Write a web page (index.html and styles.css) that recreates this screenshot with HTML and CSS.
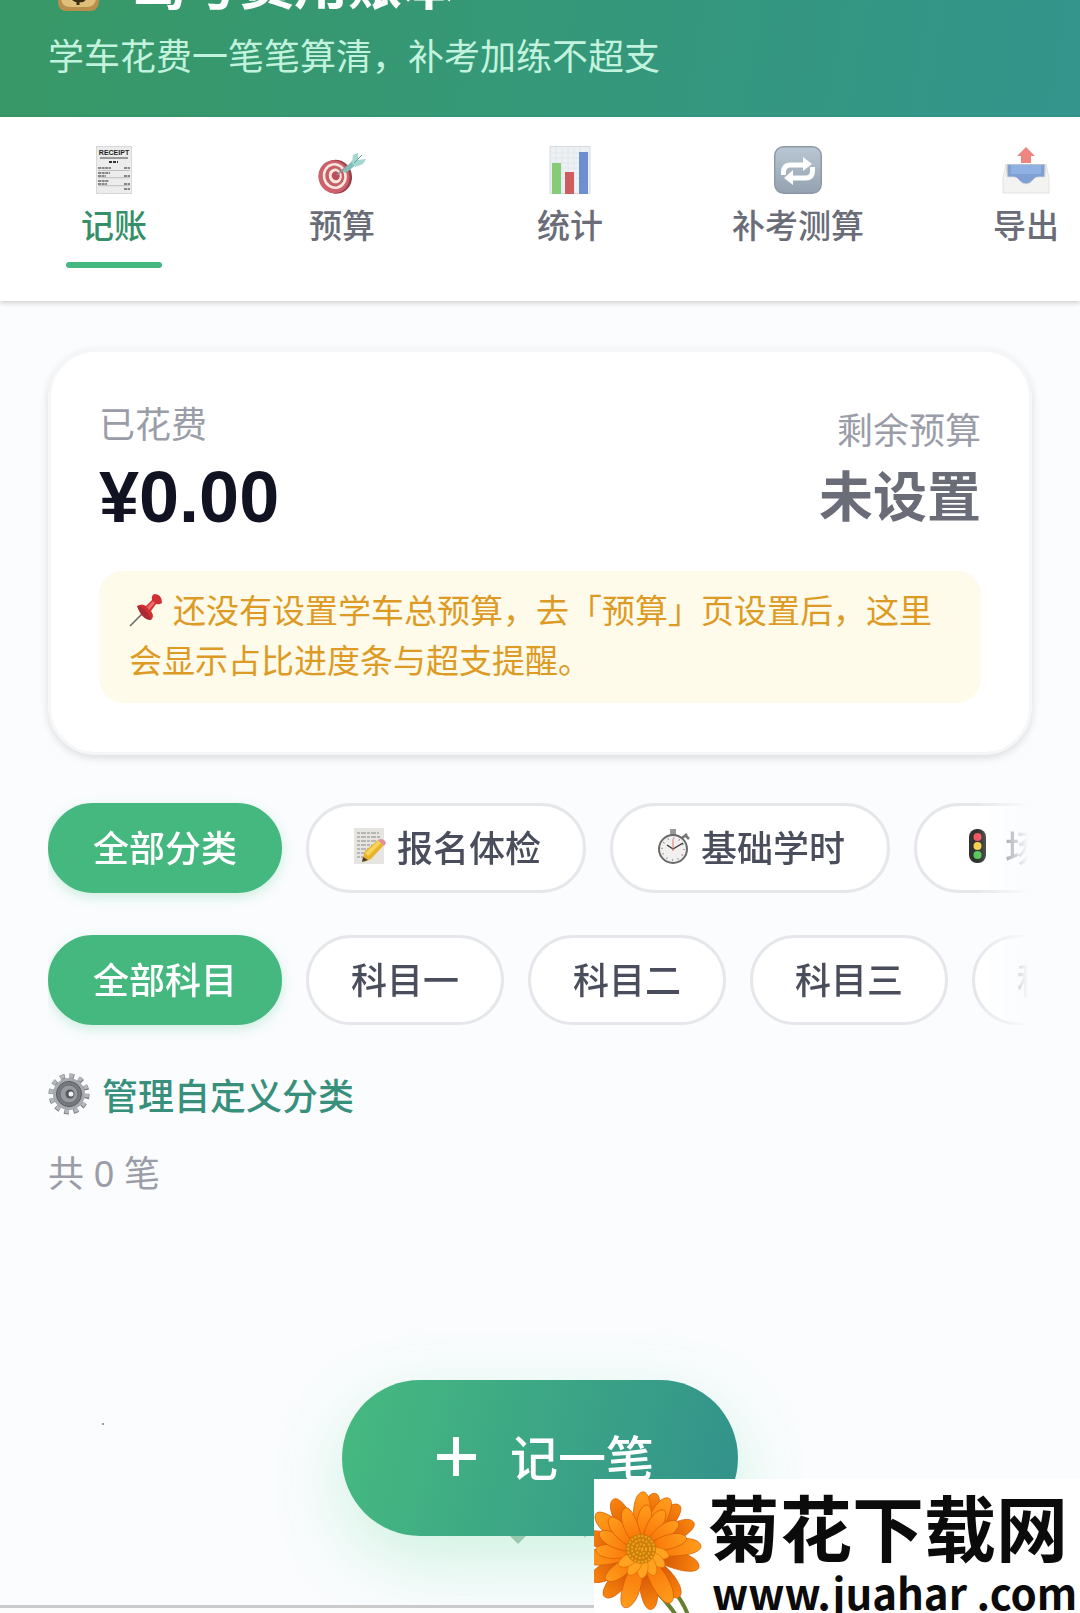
FILE: index.html
```html
<!DOCTYPE html>
<html lang="zh-CN">
<head>
<meta charset="utf-8">
<meta name="viewport" content="width=device-width, initial-scale=1">
<title>驾考费用账本</title>
<link rel="stylesheet" href="styles.css">
</head>
<body>
<header class="header">
  <h1 class="header-title">
    <svg class="icon-title" viewBox="0 0 54 54" aria-hidden="true">
      <path d="M20 6h17l-4 9q20 14 18 30-1 9-9 9H19q-9 0-9-9 0-16 14-30z" fill="#b98f4b"/>
      <path d="M24 18Q13 28 13 40q0 10 9 10h17q9 0 9-10 0-12-12-22z" fill="#e0c078"/>
      <circle cx="30" cy="34" r="12" fill="#edd48f"/>
      <path d="M37 29q-3-4-8-3-5 1-4 5 1 3 6 4 6 1 6 5 0 4-6 4-5 0-8-4M30 22v26" fill="none" stroke="#3a2c14" stroke-width="3"/>
    </svg>
    <span>驾考费用账本</span>
  </h1>
  <p class="header-sub">学车花费一笔笔算清，补考加练不超支</p>
</header>

<nav class="tabs">
  <button class="tab tab-active" type="button">
    <svg class="icon-tab" viewBox="0 0 48 48" aria-hidden="true">
      <path d="M6 0h36v48H6z" fill="#d8d8d8"/><path d="M7 1h34v46H7z" fill="#ececec"/>
      <text x="24" y="9" text-anchor="middle" class="receipt-head">RECEIPT</text>
      <path d="M10 12h28" stroke="#999" stroke-width="2"/>
      <path d="M19 16h9" stroke="#333" stroke-width="2" stroke-dasharray="3 1"/>
      <path d="M8 22h13M8 27h12M8 30h8M8 35h11M8 38h9M34 22h6M34 30h6M34 38h6M34 43h6" stroke="#666" stroke-width="1.500" stroke-dasharray="3 .6"/>
      <path d="M8 24.500h32M8 31.700h32M8 39.700h32" stroke="#aaa" stroke-width=".7"/>
    </svg>
    <span class="tab-label">记账</span>
  </button>
  <button class="tab" type="button">
    <svg class="icon-tab" viewBox="0 0 48 48" aria-hidden="true">
      <g transform="rotate(-14 17 31)">
        <ellipse cx="18" cy="31" rx="16" ry="17" fill="#9c3e47"/>
        <ellipse cx="16" cy="30.500" rx="15.500" ry="16.500" fill="#cc626b"/>
        <ellipse cx="17" cy="30" rx="12" ry="13" fill="#fae9e2"/>
        <ellipse cx="17" cy="30" rx="9.500" ry="10.500" fill="#c75f67"/>
        <ellipse cx="17.500" cy="30" rx="6.500" ry="7.500" fill="#fae9e2"/>
        <ellipse cx="18" cy="30" rx="4" ry="4.500" fill="#bd4f59"/>
      </g>
      <path d="M19 29 29 20" stroke="#8b8f91" stroke-width="1.600"/>
      <path d="M24 25 36 13l4 4-12 10z" fill="#82bdb9"/>
      <path d="m34 17 1-8 5-2v7l8-1-3 5-8 3z" fill="#a2d7d2"/><path d="m36 17 8-8" stroke="#5e9b98"/>
    </svg>
    <span class="tab-label">预算</span>
  </button>
  <button class="tab" type="button">
    <svg class="icon-tab" viewBox="0 0 48 48" aria-hidden="true">
      <path d="M4 .5h40v47H4z" fill="#eef1f4" stroke="#d5dade"/>
      <path d="M10 1v46M16 1v46M22 1v46M28 1v46M34 1v46M40 1v46M5 7h38M5 12h38M5 17h38M5 22h38M5 27h38M5 32h38" stroke="#e0e6ea"/>
      <path d="M6 17h9v31H6z" fill="#86cb78"/><path d="M19 26h9v22h-9z" fill="#cf5d5f"/><path d="M33 6h9v42h-9z" fill="#6e8fcd"/>
    </svg>
    <span class="tab-label">统计</span>
  </button>
  <button class="tab" type="button">
    <svg class="icon-tab" viewBox="0 0 48 48" aria-hidden="true">
      <defs><linearGradient id="tile" x2="0" y2="1"><stop stop-color="#bac7d3"/><stop offset="1" stop-color="#93a1b0"/></linearGradient></defs>
      <rect x=".7" y=".7" width="46.600" height="46.600" rx="9" fill="url(#tile)" stroke="#8c9aa7" stroke-width="1.400"/>
      <path d="M9.500 29v-3q0-7 7-7H30M38.500 21v4q0 7-7 7H18" fill="none" stroke="#fff" stroke-width="5"/>
      <path d="m29 11 9 7-9 7zM19 24l-9 8 9 7z" fill="#fff"/>
    </svg>
    <span class="tab-label">补考测算</span>
  </button>
  <button class="tab" type="button">
    <svg class="icon-tab" viewBox="0 0 48 48" aria-hidden="true">
      <path d="m24 1 9 9h-4v7H19v-7h-4z" fill="#ee8581"/>
      <path d="M5 18h38l3 15H2z" fill="#b9c2cc"/><path d="M6 19h36v20H6z" fill="#7f9fd5"/><path d="M9 19h30v9H9z" fill="#8fb0e2"/>
      <path d="m4 18-3 14v15h46V32l-3-14-1 13h-7q-3 0-5 3-7 8-14 0-2-3-5-3H5z" fill="#f3f3f2" stroke="#dcdcda" stroke-width=".8"/>
    </svg>
    <span class="tab-label">导出</span>
  </button>
</nav>

<main class="main">
  <section class="card">
    <div class="summary">
      <div>
        <p class="caption">已花费</p>
        <p class="amount">¥0.00</p>
      </div>
      <div class="summary-right">
        <p class="caption">剩余预算</p>
        <p class="remaining">未设置</p>
      </div>
    </div>
    <p class="note"><svg class="icon-pin" viewBox="0 0 34 34" aria-hidden="true">
      <path d="M1 33 14 20" stroke="#686868" stroke-width="1.600"/>
      <path d="M8 13q5-3 9 0l6-6q-1-4 2-6 8 0 8 9-3 2-6 1l-5 7q4 6 0 9-8 0-14-14z" fill="#cf2f35"/>
      <path d="M8 13q9 1 14 14-9 0-14-14z" fill="#a82a32"/><path d="m18 14 6-6 2 2-6 7z" fill="#ef6b6b"/>
    </svg>还没有设置学车总预算，去「预算」页设置后，这里会显示占比进度条与超支提醒。</p>
  </section>

  <div class="chips">
    <button class="chip chip-active" type="button">全部分类</button>
    <button class="chip" type="button">
      <svg class="icon-chip" viewBox="0 0 36 36" aria-hidden="true">
        <path d="M3 0h30v36H3z" fill="#e6e5e2"/>
        <path d="M6 5h22M6 9h24M6 13h20M6 17h15M6 21h12M6 25h8M6 29h6" stroke="#888" stroke-width="1" stroke-dasharray="3 1 5 1"/>
        <path d="m12 29 2-6 13-11 6 5-13 14-7 3z" fill="#e9b32c"/><path d="m14 25 13-12 3 2-13 13z" fill="#f7d55a"/>
        <path d="m27 12 2-1q5 0 6 4l-2 3z" fill="#e58d9c"/><path d="m12 29-1 5 6-2z" fill="#4a3a2d"/>
      </svg>
      <span>报名体检</span>
    </button>
    <button class="chip" type="button">
      <svg class="icon-chip" viewBox="0 0 36 36" aria-hidden="true">
        <path d="M15 1h6v6h-6z" fill="#999"/><path d="m27 10 5-4M31 8l3 3" stroke="#777" stroke-width="2.500"/>
        <circle cx="18" cy="21" r="14" fill="#f1f0ee" stroke="#6a6a6a" stroke-width="2"/>
        <circle cx="18" cy="21" r="11" fill="none" stroke="#999" stroke-width="2" stroke-dasharray="1 4.760"/>
        <path d="m12 17 6 4 10-6" fill="none" stroke="#333" stroke-width="1.300"/><path d="M18 23V11" stroke="#db7770"/>
      </svg>
      <span>基础学时</span>
    </button>
    <button class="chip" type="button">
      <svg class="icon-chip" viewBox="0 0 36 36" aria-hidden="true">
        <rect x="10" y="1" width="17" height="34" rx="8" fill="#30332f"/>
        <circle cx="18.500" cy="9" r="4" fill="#ef5863"/><circle cx="18.500" cy="18" r="4" fill="#f5d14d"/><circle cx="18.500" cy="27" r="4" fill="#57c85b"/>
      </svg>
      <span>场地训练</span>
    </button>
  </div>

  <div class="chips">
    <button class="chip chip-active" type="button">全部科目</button>
    <button class="chip" type="button">科目一</button>
    <button class="chip" type="button">科目二</button>
    <button class="chip" type="button">科目三</button>
    <button class="chip" type="button">科目四</button>
  </div>

  <a class="manage" href="#categories">
    <svg class="icon-gear" viewBox="0 0 42 42" aria-hidden="true">
      <circle cx="21" cy="21" r="18" fill="none" stroke="#74777c" stroke-width="5" stroke-dasharray="4.700 4.720"/>
      <circle cx="21" cy="20.500" r="18" fill="none" stroke="#b4b7bb" stroke-width="4" stroke-dasharray="4 5.420"/>
      <circle cx="21" cy="21" r="16" fill="#a7aaae"/><circle cx="21" cy="21" r="12.500" fill="#777b81" stroke="#575b60"/>
      <circle cx="21" cy="21" r="9" fill="#989ca1" stroke="#686c71"/><circle cx="22" cy="21" r="4.500" fill="#55585d"/><circle cx="23" cy="21" r="2.500" fill="#f4f4f4"/>
    </svg>
    <span>管理自定义分类</span>
  </a>
  <p class="count">共 0 笔</p>
  <svg class="empty" viewBox="0 0 984 124" aria-hidden="true">
    <circle cx="55" cy="4" r="1" fill="#777"/>
    <path d="M458 112h24l-12 12z" fill="#a9c7b8"/><path d="M532 112h10l-5 6z" fill="#c4dccf"/>
  </svg>
</main>
<footer class="footer"></footer>

<button class="fab" type="button">
  <svg class="icon-plus" viewBox="0 0 60 60" aria-hidden="true"><path d="M30 12v39M11 32h39" stroke="#fff" stroke-width="6"/></svg>
  <span>记一笔</span>
</button>

<aside class="watermark">
  <svg class="flower" viewBox="0 0 110 134" aria-hidden="true">
    <defs>
      <linearGradient id="petal" x2="0" y2="1"><stop stop-color="#ff9d1c"/><stop offset=".6" stop-color="#fa7d0c"/><stop offset="1" stop-color="#d14802"/></linearGradient>
      <linearGradient id="petal-dark" x2="0" y2="1"><stop stop-color="#fa860e"/><stop offset="1" stop-color="#c03c00"/></linearGradient>
      <path id="p1" d="M48 72C36 50 37 16 48 13S60 50 48 72z" stroke="#d65a05" stroke-width=".7"/>
      <path id="p2" d="M48 72C37 54 39 29 48 26S57 54 48 72z" stroke="#d65a05" stroke-width=".7"/>
      <path id="p3" d="M48 72C40 65 41 48 48 45S56 65 48 72z" stroke="#e06a08" stroke-width=".6"/>
    </defs>
    <path d="M62 112q10 10 20 24M80 112q9 11 14 24" fill="none" stroke="#67802f" stroke-width="4"/>
    <g fill="url(#petal-dark)">
      <use href="#p1" transform="rotate(12 48 72)"/><use href="#p1" transform="rotate(38 48 72)"/><use href="#p1" transform="rotate(60 48 72)"/><use href="#p1" transform="rotate(105 48 72)"/><use href="#p1" transform="rotate(140 48 72)"/><use href="#p1" transform="rotate(170 48 72)"/><use href="#p1" transform="rotate(218 48 72)"/><use href="#p1" transform="rotate(240 48 72)"/><use href="#p1" transform="rotate(285 48 72)"/><use href="#p1" transform="rotate(330 48 72)"/>
    </g>
    <g fill="url(#petal)">
      <use href="#p1" transform="rotate(0 48 72)"/><use href="#p1" transform="rotate(26 48 72)"/><use href="#p1" transform="rotate(84 48 72)"/><use href="#p1" transform="rotate(150 48 72)"/><use href="#p1" transform="rotate(196 48 72)"/><use href="#p1" transform="rotate(262 48 72)"/><use href="#p1" transform="rotate(308 48 72)"/>
      <use href="#p2" transform="rotate(5 48 72)"/><use href="#p2" transform="rotate(27 48 72)"/><use href="#p2" transform="rotate(50 48 72)"/><use href="#p2" transform="rotate(72 48 72)"/><use href="#p2" transform="rotate(270 48 72)"/><use href="#p2" transform="rotate(292 48 72)"/><use href="#p2" transform="rotate(314 48 72)"/><use href="#p2" transform="rotate(337 48 72)"/><use href="#p2" transform="rotate(230 48 72)"/>
    </g>
    <g fill="#ffa320">
      <use href="#p3" transform="rotate(98 48 72)"/><use href="#p3" transform="rotate(122 48 72)"/><use href="#p3" transform="rotate(150 48 72)"/><use href="#p3" transform="rotate(178 48 72)"/><use href="#p3" transform="rotate(206 48 72)"/><use href="#p3" transform="rotate(236 48 72)"/>
    </g>
    <circle cx="47" cy="70" r="15" fill="#d07c08"/>
    <g fill="none" stroke="#eaa822" stroke-width="2" stroke-dasharray="2 1.600"><circle cx="47" cy="70" r="13"/><circle cx="47" cy="70" r="9"/><circle cx="47" cy="70" r="5"/><circle cx="47" cy="70" r="1.500"/></g>
  </svg>
  <div class="watermark-text">
    <p class="watermark-name">菊花下载网</p>
    <p class="watermark-url">www.juahar .com</p>
  </div>
</aside>
</body>
</html>
```
FILE: styles.css
```css
* {
  box-sizing: border-box;
}

body {
  margin: 0;
  min-height: 100vh;
  display: flex;
  flex-direction: column;
  overflow-x: hidden;
  background: #fafcfe;
  color: #4a4e5c;
  font-family: "Noto Sans CJK SC", "Noto Sans", sans-serif;
  font-size: 36px;
}

h1,
p {
  margin: 0;
}

button {
  border: 0;
  background: none;
  font: inherit;
  color: inherit;
  cursor: pointer;
}

svg {
  display: block;
  flex: none;
}

/* The header is scrolled partly out of view */
.header {
  margin-top: -99px;
  padding: 48px 48px 36px;
  background: linear-gradient(100deg, #389866 0%, #359878 50%, #33958c 100%);
}

.header-title {
  display: flex;
  align-items: flex-end;
  gap: 30px;
  color: #fff;
  font-size: 54px;
  line-height: 66px;
  font-weight: 700;
}

.icon-title {
  width: 54px;
  height: 54px;
  margin-bottom: 4px;
}

.header-sub {
  margin-top: 12px;
  color: #c2f3df;
  line-height: 54px;
}

.tabs {
  position: relative;
  display: flex;
  flex: none;
  height: 184px;
  overflow: hidden;
  background: #fff;
  box-shadow: 0 2px 5px rgba(0, 0, 0, 0.18);
}

.tab {
  flex: 0 0 228px;
  display: flex;
  flex-direction: column;
  align-items: center;
  padding: 29px 0 0;
  color: #6a6d78;
  font-size: 33px;
  line-height: 36px;
  font-weight: 500;
}

.tab-label {
  margin-top: 12px;
}

.tab-active {
  color: #35906a;
}

.tab-active::after {
  content: "";
  width: 96px;
  height: 6px;
  margin-top: 20px;
  border-radius: 3px;
  background: #45b880;
}

.icon-tab {
  width: 48px;
  height: 48px;
}

.receipt-head {
  font: 700 7px "Liberation Sans", sans-serif;
  fill: #222;
}

.main {
  flex: 1;
  padding: 48px 48px 0;
}

.card {
  padding: 49px 48px;
  border: 3px solid #f5f6f8;
  border-radius: 48px;
  background: #fff;
  box-shadow: 0 3px 8px rgba(0, 0, 0, 0.13);
}

.summary {
  display: flex;
  justify-content: space-between;
  align-items: flex-end;
}

.summary-right {
  text-align: right;
}

.caption {
  color: #9a9da7;
  line-height: 42px;
}

.amount {
  margin-top: 12px;
  color: #111322;
  font-family: "Liberation Sans", sans-serif;
  font-size: 72px;
  line-height: 84px;
  font-weight: 700;
}

.remaining {
  color: #6a6d78;
  font-size: 54px;
  line-height: 90px;
  font-weight: 700;
}

.note {
  margin-top: 32px;
  padding: 13px 30px 19px;
  border-radius: 24px;
  background: #fffbeb;
  color: #dd9a24;
  font-size: 33px;
  line-height: 50px;
}

.icon-pin {
  display: inline-block;
  width: 34px;
  height: 34px;
  margin-right: 10px;
  vertical-align: -4px;
}

.chips {
  display: flex;
  gap: 24px;
  margin-top: 30px;
  padding: 18px 0;
  overflow: hidden;
  -webkit-mask-image: linear-gradient(to right, #000 calc(100% - 54px), transparent calc(100% - 4px));
  mask-image: linear-gradient(to right, #000 calc(100% - 54px), transparent calc(100% - 4px));
}

.chips + .chips {
  margin-top: 6px;
}

.chip {
  flex: none;
  display: flex;
  align-items: center;
  gap: 10px;
  height: 90px;
  padding: 0 42px 4px;
  border: 3px solid #e6e7ea;
  border-radius: 45px;
  background: #fff;
  font-weight: 500;
  white-space: nowrap;
}

.chip-active {
  border-color: #45b880;
  background: #45b880;
  color: #fff;
  box-shadow: 0 4px 12px rgba(72, 200, 130, 0.25);
}

.icon-chip {
  width: 36px;
  height: 36px;
}

.manage {
  display: flex;
  align-items: center;
  gap: 12px;
  width: max-content;
  margin-top: 27px;
  color: #38907c;
  line-height: 48px;
  font-weight: 500;
  text-decoration: none;
}

.icon-gear {
  width: 42px;
  height: 42px;
}

.count {
  margin-top: 33px;
  color: #9a9da7;
  font-family: "Liberation Sans", "Noto Sans CJK SC", sans-serif;
  line-height: 48px;
}

.empty {
  width: 100%;
  margin-top: 221px;
}

.footer {
  position: relative;
  z-index: 2;
  height: 8px;
  border-top: 3px solid #cacaca;
  background: #fcfcfc;
}

.fab {
  position: fixed;
  z-index: 1;
  bottom: 77px;
  left: 50%;
  transform: translateX(-50%);
  display: flex;
  align-items: center;
  gap: 24px;
  height: 156px;
  padding: 0 84px 6px;
  border-radius: 78px;
  background: linear-gradient(105deg, #45b880 5%, #33938b 95%);
  box-shadow: 0 24px 72px rgba(72, 215, 130, 0.24);
  color: #fff;
  font-size: 48px;
  font-weight: 500;
  white-space: nowrap;
}

.icon-plus {
  width: 60px;
  height: 60px;
}

.watermark {
  position: fixed;
  z-index: 3;
  right: 0;
  bottom: 0;
  display: flex;
  width: 486px;
  height: 134px;
  overflow: hidden;
  background: #fff;
}

.flower {
  width: 110px;
  height: 134px;
}

.watermark-text {
  padding: 8px 0 0 4px;
  color: #0b0b0b;
  font-weight: 700;
  white-space: nowrap;
}

.watermark-name {
  font-size: 72px;
  line-height: 76px;
}

.watermark-url {
  padding-left: 4px;
  font-size: 42px;
  line-height: 58px;
}
```
